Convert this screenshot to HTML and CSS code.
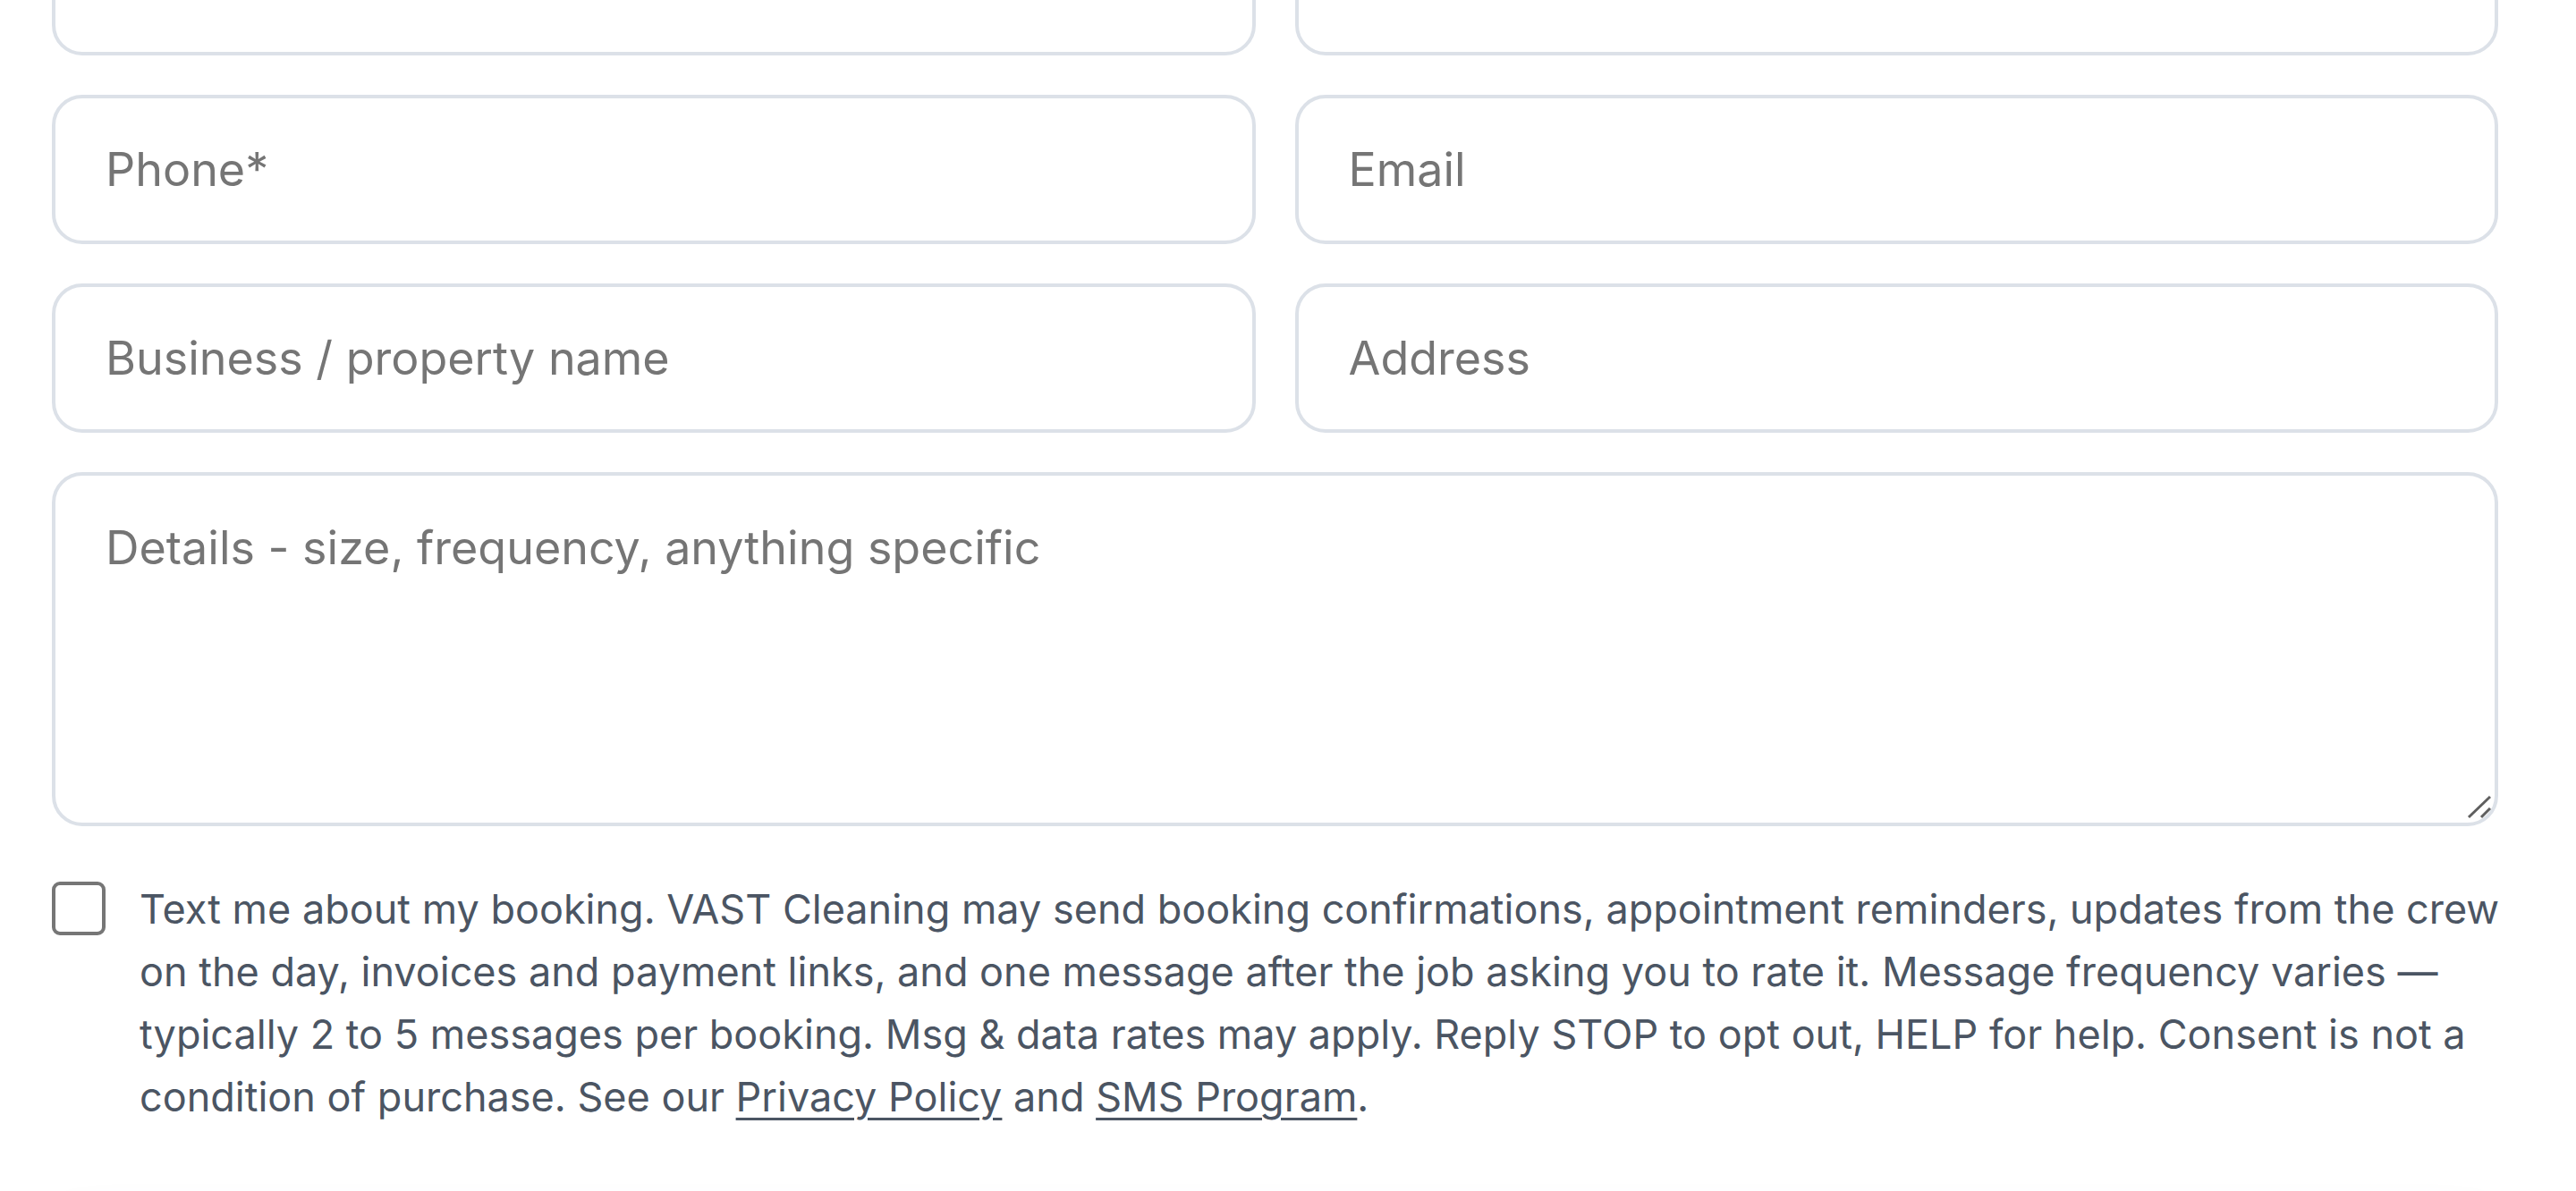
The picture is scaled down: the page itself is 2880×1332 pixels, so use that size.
FILE: index.html
```html
<!DOCTYPE html>
<html lang="en">
<head>
<meta charset="utf-8">
<title>Quote request</title>
<link rel="stylesheet" href="styles.css">
</head>
<body>
<form class="form">
  <div class="row">
    <input class="field" type="text" placeholder="Name*">
    <input class="field" type="text" placeholder="Service">
  </div>
  <div class="row">
    <input class="field" type="tel" placeholder="Phone*">
    <input class="field" type="email" placeholder="Email">
  </div>
  <div class="row">
    <input class="field" type="text" placeholder="Business / property name">
    <input class="field" type="text" placeholder="Address">
  </div>
  <div class="area-wrap">
    <textarea class="field area" placeholder="Details - size, frequency, anything specific"></textarea>
    <svg class="grip" viewBox="0 0 40 40" width="40" height="40" aria-hidden="true">
      <line x1="7" y1="30" x2="31" y2="7"/>
      <line x1="21" y1="30" x2="31" y2="20"/>
    </svg>
  </div>
  <label class="consent">
    <input class="check" type="checkbox">
    <span class="consent-text">Text me about my booking. VAST Cleaning may send booking confirmations, appointment reminders, updates from the crew on the day, invoices and payment links, and one message after the job asking you to rate it. Message frequency varies — typically 2 to 5 messages per booking. Msg &amp; data rates may apply. Reply STOP to opt out, HELP for help. Consent is not a condition of purchase. See our <a href="#" class="link">Privacy Policy</a> and <a href="#" class="link">SMS Program</a>.</span>
  </label>
  <div class="submit-glow" aria-hidden="true"></div>
</form>
</body>
</html>
```
FILE: styles.css
```css
html, body {
  margin: 0;
  padding: 0;
  background: #ffffff;
  overflow: hidden;
}

body {
  font-family: Inter, "Liberation Sans", sans-serif;
}

.form {
  display: flex;
  flex-direction: column;
  gap: 44px;
  padding: 0 87px 0 58px;
  margin-top: -105px;
}

.row {
  display: grid;
  grid-template-columns: 1fr 1fr;
  gap: 44px;
}

.field {
  box-sizing: border-box;
  height: 167px;
  width: 100%;
  margin: 0;
  border: 4px solid #dce1e8;
  border-radius: 34px;
  padding: 0 56px;
  background: #ffffff;
  font-family: Inter, "Liberation Sans", sans-serif;
  font-size: 52px;
  color: #1f2937;
  outline: none;
}

.field::placeholder {
  color: #757575;
  opacity: 1;
}

.area-wrap {
  position: relative;
}

.area {
  display: block;
  height: 396px;
  padding: 49px 56px;
  resize: none;
}

.grip {
  position: absolute;
  right: 0;
  bottom: 0;
  stroke: #5f5f5f;
  stroke-width: 3;
  stroke-linecap: butt;
}

.consent {
  display: flex;
  align-items: flex-start;
  gap: 38px;
  margin-top: 14px;
}

.check {
  appearance: none;
  -webkit-appearance: none;
  flex: 0 0 auto;
  box-sizing: border-box;
  width: 60px;
  height: 60px;
  margin: 4px 0 0 0;
  border: 4px solid #767676;
  border-radius: 9px;
  background: #ffffff;
}

.consent-text {
  font-size: 45px;
  line-height: 70px;
  color: #4b5563;
  margin-right: -40px;
}

.link {
  color: inherit;
  text-decoration: underline;
  text-decoration-thickness: 3px;
  text-underline-offset: 7px;
}

.submit-glow {
  margin-top: 79px;
  height: 150px;
  border-radius: 34px;
  background: #ffffff;
  box-shadow: 0 -8px 60px rgba(20, 150, 165, 0.12);
}
```
